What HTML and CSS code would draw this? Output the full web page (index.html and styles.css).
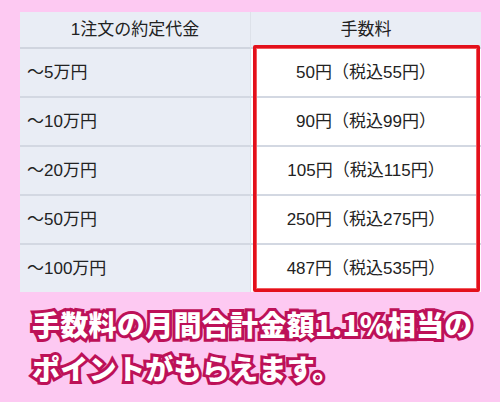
FILE: index.html
```html
<!DOCTYPE html>
<html lang="ja">
<head>
<meta charset="utf-8">
<link rel="stylesheet" href="styles.css">
</head>
<body>
<div class="page">
  <div class="table-wrap">
    <div class="fee-table">
      <div class="cell head">1注文の約定代金</div>
      <div class="cell head right">手数料</div>
      <div class="cell label">〜5万円</div>
      <div class="cell fee">50円（税込55円）</div>
      <div class="cell label">〜10万円</div>
      <div class="cell fee">90円（税込99円）</div>
      <div class="cell label">〜20万円</div>
      <div class="cell fee">105円（税込115円）</div>
      <div class="cell label">〜50万円</div>
      <div class="cell fee">250円（税込275円）</div>
      <div class="cell label last">〜100万円</div>
      <div class="cell fee last">487円（税込535円）</div>
    </div>
    <div class="highlight"></div>
  </div>
  <p class="note">手数料の月間合計金額1.1%相当の<br>ポイントがもらえます。</p>
</div>
</body>
</html>
```

FILE: styles.css
```css
html, body {
  margin: 0;
  padding: 0;
}
body {
  background: #fdc9f2;
  width: 500px;
  height: 402px;
  overflow: hidden;
  font-family: "Noto Sans CJK JP", "Noto Sans", sans-serif;
}
.page {
  padding: 12px 19px 0 20px;
}
.table-wrap {
  position: relative;
}
.fee-table {
  display: grid;
  grid-template-columns: 230px 231px;
  grid-template-rows: 37px repeat(4, 49px) 47px;
  background: #e9edf5;
}
.cell {
  display: flex;
  align-items: center;
  font-family: "Liberation Sans", "Noto Sans CJK JP", sans-serif;
  font-size: 17px;
  color: #222;
  border-bottom: 2px solid #d3d8e2;
  box-sizing: border-box;
  line-height: 1;
}
.cell.last {
  border-bottom: none;
}
.head {
  justify-content: center;
  background: #e9edf5;
  border-bottom: 2px solid #d0d5df;
}
.head.right {
  border-left: 1px solid #dde1e9;
}
.label {
  padding-left: 7px;
  background: #e9edf5;
}
.fee {
  justify-content: center;
  background: #fff;
  border-left: 1px solid #dde1e9;
}
.highlight {
  position: absolute;
  left: 233px;
  top: 33px;
  width: 227px;
  height: 247px;
  box-sizing: border-box;
  border: 3px solid #e3101b;
  border-radius: 2px;
  box-shadow: inset 0 0 0 1px #f25a5e;
}
.note {
  margin: 10px 0 0 12px;
  font-size: 28px;
  line-height: 44px;
  font-weight: 900;
  color: #fff;
  -webkit-text-stroke: 6px #bd1158;
  paint-order: stroke fill;
  letter-spacing: 0.3px;
}
```
